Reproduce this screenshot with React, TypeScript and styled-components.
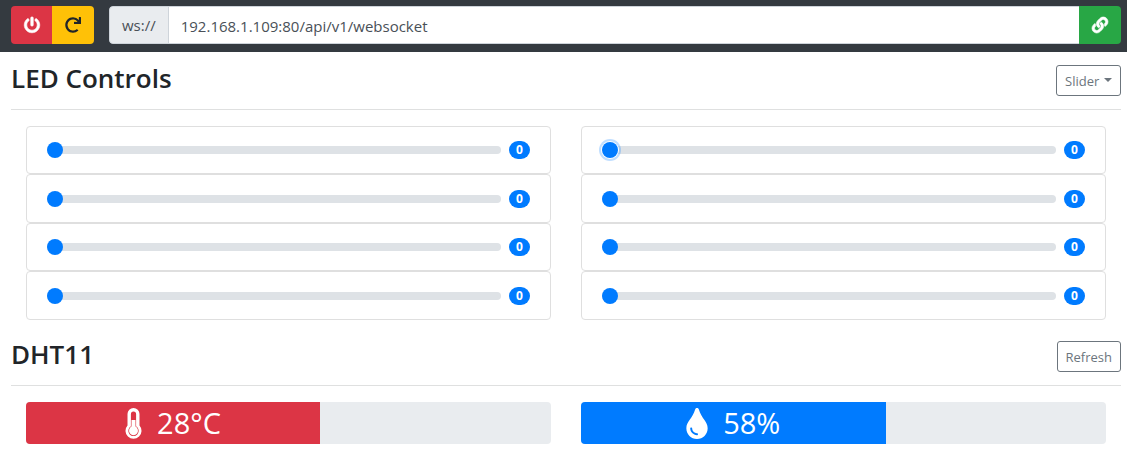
import React, { useState } from "react";
import styled, { createGlobalStyle, css } from "styled-components";
import { FaLink, FaPowerOff, FaRedo, FaTint } from "react-icons/fa";

const GlobalStyle = createGlobalStyle`
  *, *::before, *::after { box-sizing: border-box; }
  body {
    margin: 0;
    background: #fff;
    color: #212529;
    font: 400 15px/24px "Open Sans", "Noto Sans", sans-serif;
  }
  button, input, select { font: inherit; margin: 0; }
  svg { display: block; flex: none; }
`;

const Navbar = styled.nav`
  display: flex;
  gap: 15px;
  padding: 6px 6px 8px 11px;
  background: #343a40;
`;

const ButtonGroup = styled.div`
  display: flex;
  border-radius: 4px;
  overflow: hidden;
  button + button { margin-left: -1px; }
`;

const tones = {
  danger: { background: "#dc3545", color: "#fff" },
  warning: { background: "#ffc107", color: "#212529" },
  success: { background: "#28a745", color: "#fff" },
  primary: { background: "#007bff", color: "#fff" },
};
type Tone = keyof typeof tones;

const IconButton = styled.button<{ $tone: Tone }>`
  display: flex;
  align-items: center;
  justify-content: center;
  height: 38px;
  padding: 0 13px;
  border: 0;
  font-size: 16px;
  background: ${(p) => tones[p.$tone].background};
  color: ${(p) => tones[p.$tone].color};
  svg {
    overflow: visible;
    stroke-width: ${(p) => (p.$tone === "warning" ? 0 : 20)}px;
  }
`;

const AddressGroup = styled.form`
  display: flex;
  flex: 1;
  min-width: 0;
  border-radius: 4px;
  overflow: hidden;
`;

const Scheme = styled.label`
  display: flex;
  align-items: center;
  padding: 0 12px;
  border: 1px solid #ced4da;
  border-right: 0;
  border-radius: 4px 0 0 4px;
  background: #e9ecef;
  color: #495057;
`;

const Address = styled.input`
  flex: 1;
  min-width: 0;
  height: 38px;
  padding: 2px 12px 0;
  border: 1px solid #ced4da;
  border-right: 0;
  background: #fff;
  color: #495057;
  outline: 0;
`;

const Page = styled.main`
  display: flex;
  flex-direction: column;
  gap: 21px;
  padding: 13px 6px 10px 11px;
`;

const SectionHeader = styled.header`
  display: flex;
  align-items: flex-start;
  justify-content: space-between;
  height: 45px;
  margin-bottom: 16px;
  border-bottom: 1px solid #dfe0e0;
`;

const Title = styled.h2`
  margin: 0;
  font-size: 26px;
  font-weight: 600;
  line-height: 26px;
`;

const outlined = css`
  height: 31px;
  border: 1px solid #6c757d;
  border-radius: 3px;
  background: transparent;
  color: #6c757d;
  font-size: 13px;
  line-height: 21px;
`;

const OutlineButton = styled.button`
  ${outlined}
  padding: 2px 8px 0;
`;

const SelectBox = styled.div`
  position: relative;
  &::after {
    content: "";
    position: absolute;
    right: 9px;
    top: 13px;
    border: 4px solid transparent;
    border-top-color: #6c757d;
    border-bottom: 0;
    pointer-events: none;
  }
`;

const ModeSelect = styled.select`
  ${outlined}
  appearance: none;
  display: block;
  padding: 2px 20px 0 8px;
`;

const Columns = styled.div`
  display: grid;
  grid-template-columns: 1fr 1fr;
  column-gap: 30px;
  padding: 0 15px;
`;

const LedGrid = styled(Columns)`
  grid-template-rows: 48px 49px 48px 49px;
`;

const LedCard = styled.div`
  display: flex;
  align-items: center;
  gap: 8px;
  padding: 0 20px;
  border: 1px solid #dfdfdf;
  border-radius: 4px;
`;

const Range = styled.input<{ $active: boolean }>`
  flex: 1;
  min-width: 0;
  height: 24px;
  appearance: none;
  background: transparent;
  outline: 0;
  &::-webkit-slider-runnable-track {
    height: 8px;
    border-radius: 8px;
    background: #dee2e6;
  }
  &::-webkit-slider-thumb {
    appearance: none;
    width: 16px;
    height: 16px;
    margin-top: -4px;
    border-radius: 50%;
    background: #007bff;
    box-shadow: ${(p) => (p.$active ? "0 0 0 1px #fff, 0 0 0 3px rgba(0, 123, 255, 0.25)" : "none")};
  }
`;

const Badge = styled.output`
  min-width: 21px;
  height: 18px;
  padding: 0 6px;
  border-radius: 9px;
  background: #007bff;
  color: #fff;
  font-size: 12px;
  font-weight: 700;
  line-height: 18px;
  text-align: center;
`;

const Meter = styled.div`
  height: 42px;
  border-radius: 4px;
  background: #e9ecef;
  overflow: hidden;
`;

const MeterFill = styled.div<{ $tone: Tone }>`
  display: flex;
  align-items: center;
  justify-content: center;
  gap: 15px;
  height: 100%;
  background: ${(p) => tones[p.$tone].background};
  color: #fff;
  font-size: 29px;
`;

const DropIcon = styled(FaTint)`
  width: 22px;
  height: 31px;
`;

function ThermometerIcon() {
  return (
    <svg width="17" height="31" viewBox="0 0 17 31" aria-hidden="true">
      <path fill="currentColor" d="M2.5 6a6 6 0 0 1 12 0v11.5a8 8 0 1 1-12 0z" />
      <path
        fill={tones.danger.background}
        d="M5.9 6a2.6 2.6 0 0 1 5.2 0v12.3a5.2 5.2 0 1 1-5.2 0z"
      />
      <path fill="currentColor" d="M6.5 12h4v6.6a4.5 4.5 0 1 1-4 0z" />
    </svg>
  );
}

function Led({ index, active, onFocus }: { index: number; active: boolean; onFocus: () => void }) {
  const [value, setValue] = useState(0);
  return (
    <LedCard>
      <Range
        type="range"
        min={0}
        max={255}
        value={value}
        aria-label={`LED ${index}`}
        $active={active}
        onFocus={onFocus}
        onChange={(e) => setValue(Number(e.target.value))}
      />
      <Badge>{value}</Badge>
    </LedCard>
  );
}

const readings = [
  { label: "Temperature", tone: "danger" as Tone, fill: 56, text: "28°C", icon: <ThermometerIcon /> },
  { label: "Humidity", tone: "primary" as Tone, fill: 58, text: "58%", icon: <DropIcon /> },
];

export default function App() {
  const [address, setAddress] = useState("192.168.1.109:80/api/v1/websocket");
  const [active, setActive] = useState(1);
  return (
    <>
      <GlobalStyle />
      <Navbar>
        <ButtonGroup>
          <IconButton type="button" $tone="danger" aria-label="Power"><FaPowerOff /></IconButton>
          <IconButton type="button" $tone="warning" aria-label="Restart"><FaRedo /></IconButton>
        </ButtonGroup>
        <AddressGroup onSubmit={(e) => e.preventDefault()}>
          <Scheme htmlFor="address">ws://</Scheme>
          <Address id="address" type="text" value={address} onChange={(e) => setAddress(e.target.value)} />
          <IconButton $tone="success" aria-label="Connect"><FaLink /></IconButton>
        </AddressGroup>
      </Navbar>
      <Page>
        <section>
          <SectionHeader>
            <Title>LED Controls</Title>
            <SelectBox>
              <ModeSelect aria-label="Control type"><option>Slider</option></ModeSelect>
            </SelectBox>
          </SectionHeader>
          <LedGrid>
            {Array.from({ length: 8 }, (_, i) => (
              <Led key={i} index={i} active={active === i} onFocus={() => setActive(i)} />
            ))}
          </LedGrid>
        </section>
        <section>
          <SectionHeader>
            <Title>DHT11</Title>
            <OutlineButton type="button">Refresh</OutlineButton>
          </SectionHeader>
          <Columns>
            {readings.map((r) => (
              <Meter key={r.label} role="progressbar" aria-label={r.label} aria-valuenow={r.fill}>
                <MeterFill $tone={r.tone} style={{ width: `${r.fill}%` }}>
                  {r.icon}
                  <span>{r.text}</span>
                </MeterFill>
              </Meter>
            ))}
          </Columns>
        </section>
      </Page>
    </>
  );
}
